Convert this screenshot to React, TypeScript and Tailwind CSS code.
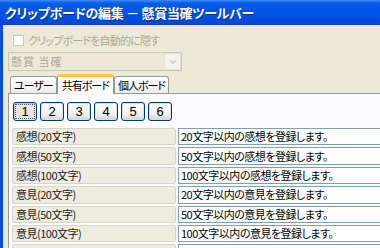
import { ChevronDown } from "lucide-react";

const rows = [
  { label: "感想(20文字)", value: "20文字以内の感想を登録します。" },
  { label: "感想(50文字)", value: "50文字以内の感想を登録します。" },
  { label: "感想(100文字)", value: "100文字以内の感想を登録します。" },
  { label: "意見(20文字)", value: "20文字以内の意見を登録します。" },
  { label: "意見(50文字)", value: "50文字以内の意見を登録します。" },
  { label: "意見(100文字)", value: "100文字以内の意見を登録します。" },
  { label: "", value: "" },
];

const jp = "font-['Noto_Sans_CJK_JP',sans-serif] [font-feature-settings:'palt']";

export default function App() {
  return (
    <div className={`w-[380px] h-[248px] overflow-hidden bg-[#ECE9D8] flex flex-col ${jp} text-[11px] leading-none tracking-[-0.5px]`}>
      {/* title bar */}
      <div className="h-[25px] shrink-0 flex items-center px-[5px] bg-[linear-gradient(#3d8cf7_0px,#0a5ce8_3px,#0055e5_12px,#0049d8_24px)] border-b border-[#0a40c8]">
        <span className="text-white font-bold text-[13px] tracking-[-0.3px] [text-shadow:1px_1px_0_#0a2a8a]">
          クリップボードの編集 － 懸賞当確ツールバー
        </span>
      </div>

      <div className="flex flex-1 min-w-0">
        <div className="w-[3px] bg-[#0a4fd6] shrink-0" />
        <div className="flex-1 min-w-0 flex flex-col pl-[5px]">
          {/* auto-hide checkbox */}
          <div className="flex items-center mt-[10px] ml-[5px] h-[11px]">
            <div className="w-[11px] h-[11px] border border-[#c9c7ba] bg-white" />
            <span className="ml-[4px] text-[#aca899] tracking-[-0.8px]">クリップボードを自動的に隠す</span>
          </div>

          {/* combo box */}
          <div className="mt-[6px] w-[174px] h-[19px] border border-[#c9c7ba] bg-[#ECE9D8] flex items-center">
            <span className="flex-1 pl-[2px] text-[#aca899] tracking-[1px]">懸賞 当確</span>
            <div className="w-[17px] h-[17px] bg-[#f3f2ec] border border-[#e4e2d7] rounded-[2px] flex items-center justify-center">
              <ChevronDown className="w-[10px] h-[10px] text-[#c9c7ba]" strokeWidth={3} />
            </div>
          </div>

          {/* tabs */}
          <div className="mt-[3px] flex items-end h-[19px] pl-[2px] relative z-10">
            <div className="h-[17px] px-[3px] flex items-center border border-b-0 border-[#919b9c] rounded-t-[3px] bg-[linear-gradient(#ffffff,#ecebe6)] text-black tracking-[-1px]">
              ユーザー
            </div>
            <div className="h-[20px] px-[4px] flex items-center border-x border-[#919b9c] border-t-[3px] border-t-[#ffc83c] rounded-t-[3px] bg-[#fcfcfe] text-black -mb-[1px] relative tracking-[-1px]">
              共有ボード
            </div>
            <div className="h-[17px] px-[3px] flex items-center border border-b-0 border-[#919b9c] rounded-t-[3px] bg-[linear-gradient(#ffffff,#ecebe6)] text-black tracking-[-1px]">
              個人ボード
            </div>
          </div>

          {/* panel */}
          <div className="flex-1 min-w-0 bg-[#fcfcfe] border-l border-t border-[#919b9c] pl-[3px] overflow-hidden">
            <div className="flex gap-[3px] mt-[8px] ml-[1px]">
              {[1, 2, 3, 4, 5, 6].map((n) => (
                <div
                  key={n}
                  className={`w-[24px] h-[19px] rounded-[3px] border border-[#003c74] flex items-center justify-center font-['Liberation_Sans',sans-serif] text-[13px] text-black tracking-normal ${
                    n === 1
                      ? "bg-[#e5e4dd] shadow-[inset_1px_1px_0_#c8c6bc]"
                      : "bg-[linear-gradient(#ffffff,#f0efe9_70%,#d6d0c5)] shadow-[inset_0_0_0_1px_#cde0f8]"
                  }`}
                >
                  {n === 1 ? (
                    <span className="border border-dotted border-[#555] px-[5px] leading-[13px]">1</span>
                  ) : (
                    n
                  )}
                </div>
              ))}
            </div>

            <div className="mt-[6px] flex flex-col">
              {rows.map((r, i) => (
                <div key={i} className="flex h-[19.4px] items-stretch gap-[2px] py-[1px]">
                  <div className="w-[164px] shrink-0 bg-[#eeebdf] border border-[#d8d4c6] rounded-[2px] flex items-center pl-[3px] text-[#222]">
                    {r.label}
                  </div>
                  <div className="w-[240px] shrink-0 bg-white border border-[#7f9db9] flex items-center pl-[2px] text-black">
                    {r.value}
                  </div>
                </div>
              ))}
            </div>
          </div>
        </div>
      </div>
    </div>
  );
}
